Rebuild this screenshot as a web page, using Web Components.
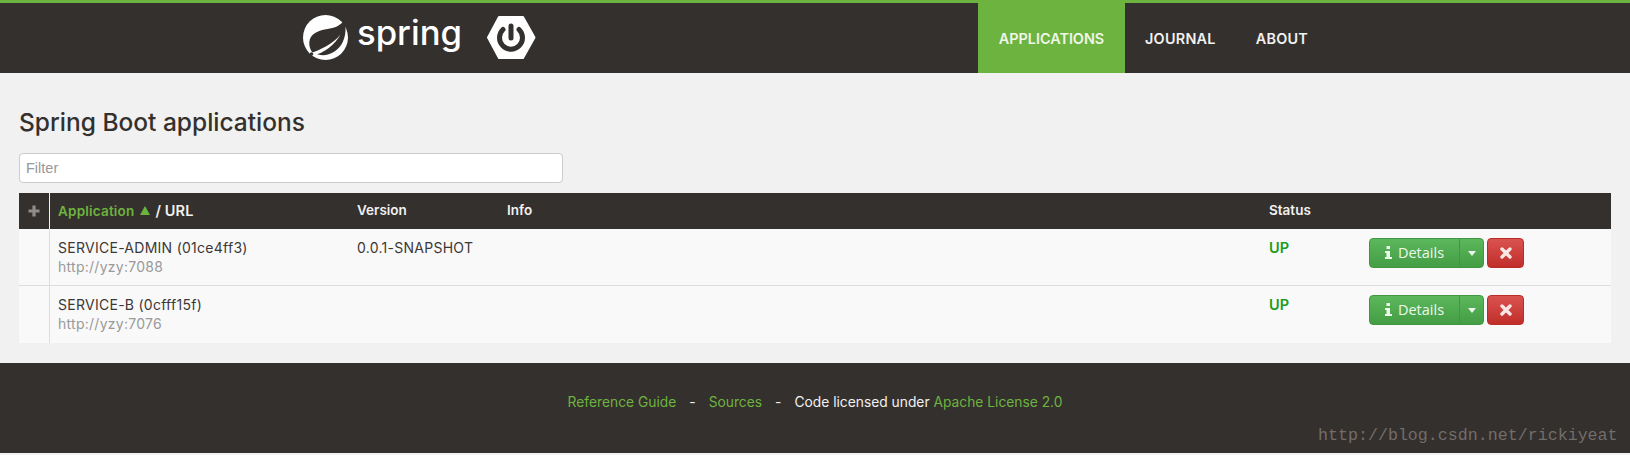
<!doctype html>
<html><head><meta charset="utf-8"><style>
html,body{margin:0;padding:0;background:#f1f1f1;height:455px;overflow:hidden}
body{font-family:Inter,"Open Sans",sans-serif;color:#34302d;position:relative}
</style></head><body>
<sba-navbar></sba-navbar>
<sba-main>
  <sba-row name="SERVICE-ADMIN (01ce4ff3)" url="http://yzy:7088" version="0.0.1-SNAPSHOT"></sba-row>
  <sba-row name="SERVICE-B (0cfff15f)" url="http://yzy:7076" version=""></sba-row>
</sba-main>
<sba-footer></sba-footer>
<sba-watermark>http://blog.csdn.net/rickiyeat</sba-watermark>
<script>
const def=(n,html,extra)=>customElements.define(n,class extends HTMLElement{
  connectedCallback(){ if(this.shadowRoot)return; const s=this.attachShadow({mode:'open'}); s.innerHTML=html; extra&&extra.call(this,s); }
});
def('sba-navbar',`<style>
:host{display:flex;height:70px;background:#34302d;border-top:3px solid #6db33f;font-family:Inter,sans-serif}
.logo{margin-left:300px;width:240px;height:70px;display:block}
nav{margin-left:438px;display:flex}
a{display:flex;align-items:center;padding:0 20px;color:#f1f1f1;font-size:14.400px;font-weight:600;letter-spacing:.25px}
a.on{background:#6db33f;color:#f0f6e8;padding:0 20px;width:107px;justify-content:center;letter-spacing:0}
</style>
<svg class="logo" viewBox="0 0 240 70">
  <circle cx="25.500" cy="34.500" r="22.500" fill="#fff"/>
  <path d="M44.500 17C41 22 36 24.500 30 25.500C19 27 9.500 30.500 9.300 39.500C9.200 43 10 46 12 49C17 52 23 53 28 51.500C37 49 43 42 45 32C46 27 45.500 21 44.500 17Z" fill="#34302d"/>
  <path d="M11 50C20 47 33 41 40.500 31.500C35 42 24 50 13 52.500Z" fill="#fff"/>
  <circle cx="11.500" cy="51" r="1.800" fill="#34302d"/>
  <text x="57" y="42" font-family="Inter,sans-serif" font-weight="500" font-size="34" fill="#fff" textLength="105" lengthAdjust="spacingAndGlyphs">spring</text>
  <path d="M188 34.500L199 14H223L234.500 34.500L223 55H199Z" fill="#fff" stroke="#fff" stroke-width="2" stroke-linejoin="round"/>
  <path d="M203 26.500A11.500 11.500 0 1 0 219 26.500" fill="none" stroke="#34302d" stroke-width="5" stroke-linecap="round"/>
  <path d="M211 23V35" fill="none" stroke="#34302d" stroke-width="5" stroke-linecap="round"/>
</svg>
<nav><a class="on">APPLICATIONS</a><a>JOURNAL</a><a>ABOUT</a></nav>`);
def('sba-main',`<style>
:host{display:block;padding:34px 19px 20px 19px;height:236px;box-sizing:content-box}
h2{margin:0 0 16px;font:500 24.500px/30px Inter,sans-serif;color:#34302d}
input{display:block;width:544px;height:30px;box-sizing:border-box;border:1px solid #ccc;border-radius:4px;background:#fff;padding:0 6px 1px;font:14.500px "Liberation Sans",sans-serif;margin:0 0 10px}
input::placeholder{color:#999}
.head{display:grid;grid-template-columns:30px 1px 299px 150px 762px 100px 1fr;background:#34302d;height:36px;align-items:center;color:#f1f1f1;font-size:13.500px;font-weight:600;width:1592px}
.head>div{padding:0 0 2px 8px}
.head .plus{padding:0;display:flex;justify-content:center}
.head .sep{padding:0;background:#f1f1f1;height:36px}
.g{color:#6db33f;letter-spacing:.2px}
.tri{display:inline-block;width:0;height:0;border:5.500px solid transparent;border-top:0;border-bottom:9.500px solid #6db33f;margin:0 2px 1px 2px}
.url{font-size:14.500px;letter-spacing:.1px}
</style>
<h2>Spring Boot applications</h2>
<input placeholder="Filter">
<div class="head">
  <div class="plus"><svg width="12" height="12" viewBox="0 0 12 12"><path d="M6 .5V11.500M.5 6H11.500" stroke="#8f8c89" stroke-width="3.200"/></svg></div><div class="sep"></div>
  <div><span class="g">Application <span class="tri"></span></span> <span class="url">/ URL</span></div><div>Version</div><div>Info</div><div>Status</div><div></div>
</div>
<slot></slot>`);
def('sba-row',`<style>
:host{display:grid;grid-template-columns:30px 1px 299px 150px 762px 100px 1fr;width:1592px;height:57px;background:#f9f9f9;box-sizing:border-box;font-size:14px;letter-spacing:.27px;color:#3c3835}
:host(:not(:last-child)){border-bottom:1px solid #ddd}
.sep{background:#ddd}
.c{padding:9px 8px 0;line-height:19px}
.u{color:#9a9a9a;margin-top:0}
.up{color:#1b9d1b;font-weight:600;font-size:14.500px;letter-spacing:0}
.acts{display:flex;padding:9px 0 0 8px;align-items:flex-start;letter-spacing:0}
.btns{display:flex;height:30px;margin-right:3px;border-radius:4px;overflow:hidden;border:1px solid #419641;box-sizing:border-box;background:linear-gradient(#5cb85c,#449d44);color:#eef7ee;font:14.500px "Open Sans",sans-serif;align-items:center}
.d{width:90px;box-sizing:border-box;height:100%;display:flex;align-items:center;justify-content:center;gap:6px;border-right:1px solid #419641;padding-bottom:2px}
.m{width:23px;height:100%;display:flex;align-items:center;justify-content:center}
.car{width:0;height:0;border:4.500px solid transparent;border-top:5px solid #eef7ee;border-bottom:0}
.x{width:37px;height:30px;box-sizing:border-box;border:1px solid #b92c28;border-radius:4px;background:linear-gradient(#d9534f,#c12e2a);display:flex;align-items:center;justify-content:center}
</style>
<div></div><div class="sep"></div>
<div class="c"><div class="n"></div><div class="u"></div></div>
<div class="c v"></div><div></div>
<div class="c up">UP</div>
<div class="acts">
  <div class="btns"><div class="d"><svg width="7" height="13" viewBox="0 0 7 13"><path d="M1.500 0H5V3H1.500ZM0 5H5V11H7V13H0V11H1.500V7H0Z" fill="#eef7ee"/></svg><span>Details</span></div><div class="m"><div class="car"></div></div></div>
  <div class="x"><svg width="12" height="12" viewBox="0 0 12 12"><path d="M2 2L10 10M10 2L2 10" stroke="#f7e6e5" stroke-width="3.400" stroke-linecap="round"/></svg></div>
</div>`,function(s){
  s.querySelector('.n').textContent=this.getAttribute('name');
  s.querySelector('.u').textContent=this.getAttribute('url');
  s.querySelector('.v').textContent=this.getAttribute('version');
});
def('sba-footer',`<style>
:host{display:block;height:90px;background:#34302d;color:#f1f1f1;font-size:13.800px;text-align:center;padding-top:30px;box-sizing:border-box;line-height:19px;padding-right:0}
a{color:#6db33f}
.s{margin:0 13px}
</style><a>Reference Guide</a><span class="s">-</span><a>Sources</a><span class="s">-</span><span>Code licensed under </span><a>Apache License 2.0</a>`);
def('sba-watermark',`<style>
:host{position:absolute;left:1318px;top:427px;font:16.650px/18px "Liberation Mono",monospace;color:#716d6a;white-space:nowrap}
</style><slot></slot>`);
</script>
</body></html>
